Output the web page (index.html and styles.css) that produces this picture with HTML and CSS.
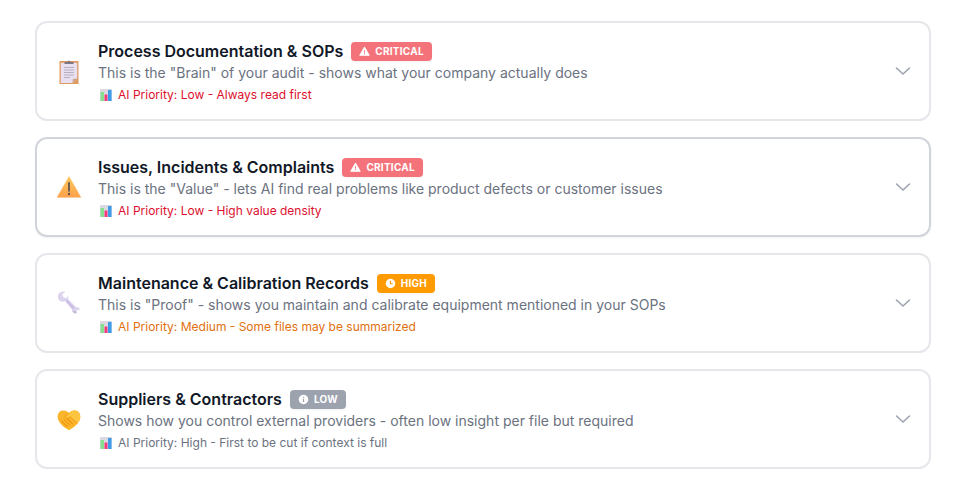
FILE: index.html
```html
<!DOCTYPE html>
<html lang="en">
<head>
<meta charset="utf-8">
<title>Audit documents</title>
<link rel="stylesheet" href="styles.css">
</head>
<body>
<svg class="defs" width="0" height="0" aria-hidden="true">
  <defs>
    <symbol id="chart" viewBox="0 0 12 12">
      <rect x="0" y="0" width="12" height="12" rx="0.5" fill="#dcd8e2"/>
      <rect x="0.5" y="3" width="3.500" height="9" fill="#86e08f"/>
      <rect x="4.500" y="5.500" width="3" height="6.500" fill="#f23d7c"/>
      <rect x="8" y="1" width="3.500" height="11" fill="#3d9bea"/>
    </symbol>
  </defs>
</svg>
<main class="list">
  <article class="card">
    <svg class="emoji" viewBox="0 0 24 24" aria-hidden="true">
      <rect x="2.500" y="2" width="19" height="23" rx="0.6" fill="#e09a5f"/>
      <path d="M3.800 3.800H20.200V19.500L15.500 24H3.800Z" fill="#e8e0f1"/>
      <path d="M15.500 24 15.800 20 20.200 19.500Z" fill="#c8a48c"/>
      <path d="M7.500 5V3H10.300A1.800 1.800 0 0 1 13.700 3H16.500V5Z" fill="#7d7685"/>
      <path d="M7 8.500h10M7 11h10M7 13.500h10M7 16h10M7 18.500h6" stroke="#a9a4b3" stroke-width="0.800"/>
    </svg>
    <div class="body">
      <div class="head">
        <h3 class="title">Process Documentation &amp; SOPs</h3>
        <span class="badge critical">
          <svg class="badge-icon" viewBox="0 0 12 12" aria-hidden="true"><path d="M6 1.500 11 10H1Z" fill="#fff" stroke="#fff" stroke-width="1.200" stroke-linejoin="round"/><path d="M6 4.500V7M6 8V9" stroke="#f4737b" stroke-width="1.100"/></svg>
          CRITICAL
        </span>
      </div>
      <p class="desc">This is the "Brain" of your audit - shows what your company actually does</p>
      <p class="priority red"><svg class="chart" aria-hidden="true"><use href="#chart"/></svg>AI Priority: Low - Always read first</p>
    </div>
    <svg class="chev" viewBox="0 0 20 20" aria-hidden="true"><path d="M3.500 7 10 13 16.500 7" fill="none" stroke="#9ca3af" stroke-width="1.600" stroke-linecap="round" stroke-linejoin="round"/></svg>
  </article>

  <article class="card active">
    <svg class="emoji" viewBox="0 0 24 24" aria-hidden="true">
      <defs><linearGradient id="warn" x1="0" y1="0" x2="0" y2="1"><stop offset="0" stop-color="#fdc75a"/><stop offset="1" stop-color="#fca24c"/></linearGradient></defs>
      <path d="M12 1.500 23.800 22.300H.2Z" fill="url(#warn)" stroke="url(#warn)" stroke-width="0.500" stroke-linejoin="round"/>
      <path d="M12 8V15.800" stroke="#5f5350" stroke-width="1.800" stroke-linecap="round"/>
      <circle cx="12" cy="19" r="1.200" fill="#5f5350"/>
    </svg>
    <div class="body">
      <div class="head">
        <h3 class="title">Issues, Incidents &amp; Complaints</h3>
        <span class="badge critical">
          <svg class="badge-icon" viewBox="0 0 12 12" aria-hidden="true"><path d="M6 1.500 11 10H1Z" fill="#fff" stroke="#fff" stroke-width="1.200" stroke-linejoin="round"/><path d="M6 4.500V7M6 8V9" stroke="#f4737b" stroke-width="1.100"/></svg>
          CRITICAL
        </span>
      </div>
      <p class="desc">This is the "Value" - lets AI find real problems like product defects or customer issues</p>
      <p class="priority red"><svg class="chart" aria-hidden="true"><use href="#chart"/></svg>AI Priority: Low - High value density</p>
    </div>
    <svg class="chev" viewBox="0 0 20 20" aria-hidden="true"><path d="M3.500 7 10 13 16.500 7" fill="none" stroke="#9ca3af" stroke-width="1.600" stroke-linecap="round" stroke-linejoin="round"/></svg>
  </article>

  <article class="card">
    <svg class="emoji" viewBox="0 0 24 24" aria-hidden="true">
      <path d="M8.200 .8C5.500 -.2 2 .8 1 4.200 .4 6.600 1.200 8.200 2.500 9.500 4 10.800 6.200 11 8 10.200L14.800 18.500C15 21.500 17 23 19.500 22.500L19.200 20.200 21 18.800 23 19C23 17 21 15.500 19 16L11 8C11.500 6.500 11.500 5 11 4L10 7 6.600 6.600 5.200 3.600Z" fill="#dcd4ec"/>
      <path d="M9.500 9.500 17 17.500" stroke="#c4b4e6" stroke-width="1.300"/>
      <path d="M15.500 20C16.200 21.500 17.500 22.300 19.300 22.300L19.200 20.200Z" fill="#bdb5cf"/>
    </svg>
    <div class="body">
      <div class="head">
        <h3 class="title">Maintenance &amp; Calibration Records</h3>
        <span class="badge high">
          <svg class="badge-icon" viewBox="0 0 12 12" aria-hidden="true"><circle cx="6" cy="6" r="5.200" fill="#fff"/><path d="M6 3V6.300H8.500" fill="none" stroke="#ff9b00" stroke-width="1.300"/></svg>
          HIGH
        </span>
      </div>
      <p class="desc">This is "Proof" - shows you maintain and calibrate equipment mentioned in your SOPs</p>
      <p class="priority orange"><svg class="chart" aria-hidden="true"><use href="#chart"/></svg>AI Priority: Medium - Some files may be summarized</p>
    </div>
    <svg class="chev" viewBox="0 0 20 20" aria-hidden="true"><path d="M3.500 7 10 13 16.500 7" fill="none" stroke="#9ca3af" stroke-width="1.600" stroke-linecap="round" stroke-linejoin="round"/></svg>
  </article>

  <article class="card">
    <svg class="emoji" viewBox="0 0 24 24" aria-hidden="true">
      <path d="M12 23.200C8 21 3 17.500 1.200 12.800 -.2 9 1.200 4 6 3.600 8.500 3.400 10.500 4.600 12 6 13.500 4.600 15.500 3.400 18 3.600 22.800 4 24.200 9 22.800 12.800 21 17.500 16 21 12 23.200Z" fill="#fbb52a"/>
      <path d="M12 6 8 9.500 10 12 13.500 10 20.300 16.500C21.500 15.200 22.300 14 22.800 12.800 24.200 9 22.800 4 18 3.600 15.500 3.400 13.500 4.600 12 6Z" fill="#fdc53f"/>
      <path d="M12 6 8 9.500 10 12 13.500 10 20.300 16.500" fill="none" stroke="#ee950f" stroke-width="0.900" stroke-linejoin="round"/>
      <path d="M5 14.500 10 19.500M7.500 12.800 12.500 17.800M10.500 12 15.500 17" fill="none" stroke="#ee950f" stroke-width="1.100" stroke-linecap="round"/>
    </svg>
    <div class="body">
      <div class="head">
        <h3 class="title">Suppliers &amp; Contractors</h3>
        <span class="badge low">
          <svg class="badge-icon" viewBox="0 0 12 12" aria-hidden="true"><circle cx="6" cy="6" r="5.200" fill="#fff"/><path d="M6 5.300V8.800M6 3V4.200" stroke="#9ca3af" stroke-width="1.400"/></svg>
          LOW
        </span>
      </div>
      <p class="desc">Shows how you control external providers - often low insight per file but required</p>
      <p class="priority gray"><svg class="chart" aria-hidden="true"><use href="#chart"/></svg>AI Priority: High - First to be cut if context is full</p>
    </div>
    <svg class="chev" viewBox="0 0 20 20" aria-hidden="true"><path d="M3.500 7 10 13 16.500 7" fill="none" stroke="#9ca3af" stroke-width="1.600" stroke-linecap="round" stroke-linejoin="round"/></svg>
  </article>
</main>
</body>
</html>
```
FILE: styles.css
```css
* { box-sizing: border-box; }
html, body { margin: 0; background: #fff; }
body {
  font-family: Inter, "Liberation Sans", sans-serif;
  overflow: hidden;
  height: 497px;
}
.defs { position: absolute; }
.list {
  display: flex;
  flex-direction: column;
  gap: 16px;
  padding: 21px 24px 0 35px;
}
.card {
  display: flex;
  align-items: center;
  height: 100px;
  padding: 16px 16px 16px 20px;
  border: 2px solid #e5e7eb;
  border-radius: 12px;
  background: #fff;
}
.card.active {
  border-color: #d1d5db;
  box-shadow: 0 1px 2px rgba(0, 0, 0, 0.05);
}
.emoji {
  flex: none;
  width: 24px;
  height: 24px;
  margin-right: 17px;
  overflow: visible;
}
.body { flex: 1; min-width: 0; }
.head {
  display: flex;
  align-items: center;
  gap: 8px;
  height: 24px;
}
.title {
  margin: 0;
  font-size: 16px;
  line-height: 24px;
  font-weight: 600;
  color: #111827;
}
.badge {
  display: inline-flex;
  align-items: center;
  gap: 5px;
  height: 19px;
  padding: 0 8px;
  border-radius: 4px;
  font-size: 10px;
  line-height: 19px;
  font-weight: 700;
  letter-spacing: 0.25px;
  color: #fff;
  box-shadow: 0 1px 2px rgba(0, 0, 0, 0.05);
}
.badge-icon { width: 11px; height: 11px; flex: none; }
.critical { background: #f4737b; }
.high { background: #ff9b00; }
.low { background: #9ca3af; }
.desc {
  margin: 0;
  font-size: 14px;
  line-height: 20px;
  color: #6b7280;
}
.priority {
  display: flex;
  align-items: center;
  margin: 4px 0 0;
  font-size: 12px;
  line-height: 16px;
}
.chart { width: 12px; height: 12px; margin: 0 6px 0 2px; flex: none; }
.red { color: #dc0f2e; }
.orange { color: #e1700f; }
.gray { color: #6b7280; }
.chev { flex: none; width: 20px; height: 20px; }
```
